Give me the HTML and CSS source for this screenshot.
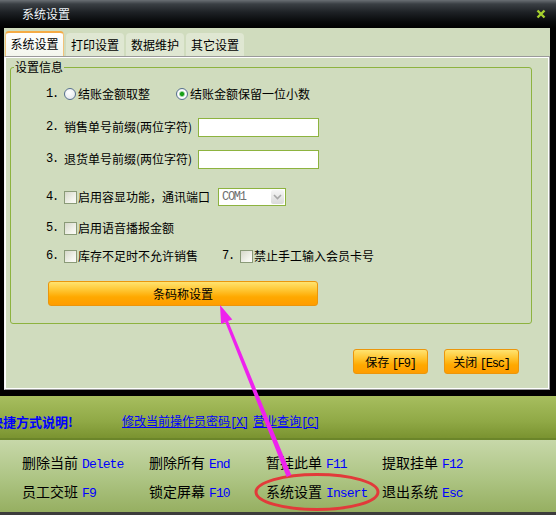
FILE: index.html
```html
<!DOCTYPE html>
<html lang="zh-CN">
<head>
    <meta charset="UTF-8">
    <meta name="viewport" content="width=device-width, initial-scale=1.0">
    <title>系统设置</title>
    <link rel="stylesheet" href="styles.css">
</head>
<body>
<div class="screen">
    <div class="dialog">
        <div class="titlebar">
            <span class="title">系统设置</span>
            <svg class="close" width="10" height="10" viewBox="0 0 10 10">
                <path d="M1.5 1.5L8.5 8.5M8.5 1.5L1.5 8.5" stroke="#a6d02e" stroke-width="2.4" fill="none"/>
            </svg>
        </div>
        <div class="dialog-body">
            <div class="tabs">
                <div class="tab active">系统设置</div>
                <div class="tab">打印设置</div>
                <div class="tab">数据维护</div>
                <div class="tab">其它设置</div>
            </div>
            <div class="panel">
                <fieldset class="group">
                    <legend>设置信息</legend>
                    <div class="row">
                        <span class="num">1.</span>
                        <label class="opt"><span class="radio"></span>结账金额取整</label>
                        <label class="opt opt-2"><span class="radio checked"></span>结账金额保留一位小数</label>
                    </div>
                    <div class="row row-2">
                        <span class="num">2.</span>
                        <span class="field-label">销售单号前缀(两位字符)</span>
                        <span class="input"></span>
                    </div>
                    <div class="row row-3">
                        <span class="num">3.</span>
                        <span class="field-label">退货单号前缀(两位字符)</span>
                        <span class="input"></span>
                    </div>
                    <div class="row row-4">
                        <span class="num">4.</span>
                        <label class="opt"><span class="check"></span>启用容显功能，通讯端口</label>
                        <div class="select">
                            <span class="select-text">COM1</span>
                            <span class="select-arrow">
                                <svg width="9" height="6" viewBox="0 0 9 6"><path d="M1 1L4.5 4.5L8 1" stroke="#a8a8a8" stroke-width="1.6" fill="none"/></svg>
                            </span>
                        </div>
                    </div>
                    <div class="row row-5">
                        <span class="num">5.</span>
                        <label class="opt"><span class="check"></span>启用语音播报金额</label>
                    </div>
                    <div class="row row-6">
                        <span class="num">6.</span>
                        <label class="opt"><span class="check"></span>库存不足时不允许销售</label>
                        <span class="num num-7">7.</span>
                        <label class="opt"><span class="check"></span>禁止手工输入会员卡号</label>
                    </div>
                    <button class="btn btn-wide">条码称设置</button>
                </fieldset>
                <div class="actions">
                    <button class="btn">保存 <span class="mono">[F9]</span></button>
                    <button class="btn">关闭 <span class="mono">[Esc]</span></button>
                </div>
            </div>
        </div>
    </div>

    <div class="app-bar">
        <span class="app-note">快捷方式说明!</span>
        <a class="app-link">修改当前操作员密码<span class="mono">[X]</span></a>
        <a class="app-link">营业查询<span class="mono">[C]</span></a>
    </div>
    <div class="shortcuts">
        <span>删除当前<span class="key">Delete</span></span>
        <span>删除所有<span class="key">End</span></span>
        <span>暂挂此单<span class="key">F11</span></span>
        <span>提取挂单<span class="key">F12</span></span>
        <span>员工交班<span class="key">F9</span></span>
        <span>锁定屏幕<span class="key">F10</span></span>
        <span>系统设置<span class="key">Insert</span></span>
        <span>退出系统<span class="key">Esc</span></span>
    </div>

    <svg class="marks" width="556" height="515" viewBox="0 0 556 515">
        <ellipse cx="317" cy="492" rx="61" ry="17.5" fill="none" stroke="#e23a3a" stroke-width="3"/>
        <polygon fill="#ee22ee" points="220,305 232.3,319.5 228.1,321.1 291.3,475.1 286.7,476.9 225.3,322.3 221.1,323.9"/>
    </svg>
</div>
</body>
</html>
```

FILE: styles.css
```css
body {
    margin: 0;
    font-family: "Noto Sans CJK SC", sans-serif;
    font-size: 12px;
    color: #000;
}
.mono {
    font-family: "Liberation Mono", monospace;
    letter-spacing: -1.2px;
}
.screen {
    position: relative;
    width: 556px;
    height: 515px;
    overflow: hidden;
    background: #3c3c3c;
}

/* dialog window */
.dialog {
    background: #000;
    padding-bottom: 6px;
}
.titlebar {
    height: 28px;
    box-sizing: border-box;
    display: flex;
    align-items: center;
    justify-content: space-between;
    padding: 0 10px 0 22px;
    background: linear-gradient(#6a6f74, #3a3f44 4px, #1e2226 12px, #07090a 22px, #000);
    color: #eef3f8;
    line-height: 14px;
}
.dialog-body {
    margin: 0 6px 0 4px;
    height: 362px;
    box-sizing: border-box;
    padding-top: 3px;
    background: #d0dcbe;
    display: flex;
    flex-direction: column;
}
.tabs {
    display: flex;
    align-items: flex-end;
    gap: 2px;
    height: 25px;
    padding-left: 1px;
}
.tab {
    width: 58px;
    height: 23px;
    line-height: 23px;
    text-align: center;
    background: #dfe7d2;
    border-radius: 4px 4px 0 0;
}
.tab.active {
    width: 59px;
    height: 25px;
    box-sizing: border-box;
    line-height: 22px;
    border: 1px solid #f2c27a;
    border-top: 2px solid #f5ab45;
    border-bottom: 0;
    background: linear-gradient(#fff, #f3f6ec);
}
.panel {
    flex: 1;
    box-sizing: border-box;
    border: 1px solid #9a9a9a;
    border-left-color: #f4f4f4;
    box-shadow: inset 1px 1px #fff, inset -1px -1px #fff;
    padding: 3px 0 0 5px;
}

/* settings group */
.group {
    width: 522px;
    box-sizing: border-box;
    margin: 0;
    border: 1px solid #8db33f;
    border-radius: 3px;
    padding: 10px 0 17px 3px;
}
.group legend {
    padding: 0 1px;
    line-height: 14px;
}
.row {
    display: flex;
    align-items: center;
    height: 20px;
    padding-left: 32px;
    line-height: 14px;
}
.row-2 { margin-top: 13px; }
.row-3 { margin-top: 12px; }
.row-4 { margin-top: 18px; }
.row-5 { margin-top: 11px; }
.row-6 { margin-top: 8px; }
.num {
    width: 18px;
    font-family: "Liberation Mono", monospace;
    letter-spacing: -1.2px;
}
.num-7 { margin-left: 24px; }
.opt {
    display: flex;
    align-items: center;
}
.opt-2 { margin-left: 26px; }
.radio {
    width: 12px;
    height: 12px;
    box-sizing: border-box;
    margin-right: 2px;
    border: 1px solid #56708e;
    border-radius: 50%;
    background: radial-gradient(circle at 40% 35%, #fff, #dfe3e9);
}
.radio.checked {
    background: radial-gradient(circle, #18a018 0 1.6px, #8fd08f 2.4px, #fff 3.4px, #dfe3e9);
}
.check {
    width: 13px;
    height: 13px;
    box-sizing: border-box;
    margin-right: 1px;
    border: 1px solid #8a9a78;
    background: linear-gradient(135deg, #d6d8ca, #f4f5ee 70%, #fbfbf8);
}
.field-label { width: 134px; }
.input {
    width: 121px;
    height: 19px;
    box-sizing: border-box;
    border: 1px solid #8db33f;
    background: #fff;
}
.select {
    width: 68px;
    height: 18px;
    box-sizing: border-box;
    margin-left: 8px;
    display: flex;
    align-items: center;
    border: 1px solid #8db33f;
    background: #fff;
}
.select-text {
    flex: 1;
    padding-left: 3px;
    color: #707070;
    font-family: "Liberation Mono", monospace;
    letter-spacing: -1.3px;
}
.select-arrow {
    width: 13px;
    height: 14px;
    margin-right: 1px;
    display: flex;
    align-items: center;
    justify-content: center;
    border-radius: 2px;
    background: linear-gradient(#f6f6f6, #dadada);
}

/* orange buttons */
.btn {
    height: 25px;
    width: 75px;
    padding: 0;
    font-family: "Noto Sans CJK SC", sans-serif;
    font-size: 12px;
    color: #000;
    border: 1px solid #eb960c;
    border-radius: 3px;
    background: linear-gradient(#ffe370, #ffc632 35%, #ffa900 65%, #ff9d00);
}
.btn-wide {
    display: block;
    width: 270px;
    margin: 15px 0 0 34px;
}
.actions {
    display: flex;
    justify-content: flex-end;
    gap: 16px;
    margin-top: 25px;
    padding-right: 30px;
}

/* underlying main window */
.app-bar {
    height: 44px;
    box-sizing: border-box;
    padding-top: 9px;
    display: flex;
    align-items: center;
    background: linear-gradient(#a7be5f, #90a946 60%, #7a9330);
    border-bottom: 2px solid #6b852a;
    line-height: 14px;
}
.app-note {
    width: 132px;
    margin-left: -10px;
    flex-shrink: 0;
    font-size: 13px;
    font-weight: bold;
    color: #0000ff;
}
.app-link {
    margin-right: 5px;
    color: #0000ff;
    text-decoration: underline;
}
.shortcuts {
    height: 72px;
    box-sizing: border-box;
    padding: 9px 0 0 22px;
    display: grid;
    grid-template-columns: 127px 117px 116px auto;
    grid-auto-rows: 29px;
    align-items: center;
    font-size: 14px;
    line-height: 16px;
    background: linear-gradient(#c7d8a9, #afc686 50%, #96af61);
}
.key {
    margin-left: 4px;
    color: #0000ff;
    font-family: "Liberation Mono", monospace;
    font-size: 13px;
    letter-spacing: -0.9px;
}

/* red/magenta annotation drawn on top of the screenshot */
.marks {
    position: absolute;
    top: 0;
    left: 0;
    pointer-events: none;
}
```
